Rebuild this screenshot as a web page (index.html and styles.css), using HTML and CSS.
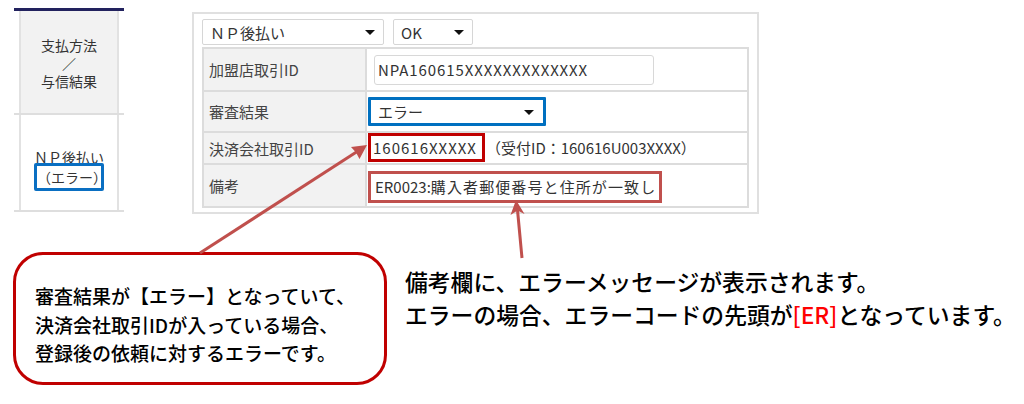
FILE: index.html
```html
<!DOCTYPE html>
<html lang="ja">
<head>
<meta charset="utf-8">
<title>NP後払い エラー</title>
<link rel="stylesheet" href="styles.css">
</head>
<body>
<div class="page">
  <div class="top">
    <div class="side">
      <div class="side-bar"></div>
      <div class="side-row side-head">
        <div class="side-cell">支払方法<br>／<br>与信結果</div>
      </div>
      <div class="side-row side-body">
        <div class="side-cell">
          <span class="np">ＮＰ後払い</span>
          <span class="blue-box">（エラー）</span>
        </div>
      </div>
    </div>
    <div class="panel">
      <div class="selects">
        <div class="select sel-method"><span>ＮＰ後払い</span><i class="caret"></i></div>
        <div class="select sel-ok"><span>OK</span><i class="caret"></i></div>
      </div>
      <div class="form-table">
        <div class="row r1">
          <div class="label">加盟店取引ID</div>
          <div class="value"><div class="input">NPA160615XXXXXXXXXXXXX</div></div>
        </div>
        <div class="row r2">
          <div class="label">審査結果</div>
          <div class="value"><div class="select sel-result"><span>エラー</span><i class="caret"></i></div></div>
        </div>
        <div class="row r3">
          <div class="label">決済会社取引ID</div>
          <div class="value"><div class="red-box">160616XXXXX</div><span class="sub">（受付ID：160616U003XXXX）</span></div>
        </div>
        <div class="row r4">
          <div class="label">備考</div>
          <div class="value"><div class="memo">ER0023:<span class="wide">購入者郵便番号と住所が一致し</span></div></div>
        </div>
      </div>
    </div>
  </div>
  <div class="bottom">
    <div class="callout">審査結果が【エラー】となっていて、<br>決済会社取引IDが入っている場合、<br>登録後の依頼に対するエラーです。</div>
    <div class="note">備考欄に、エラーメッセージが表示されます。<br>エラーの場合、エラーコードの先頭が<span class="red">[ER]</span>となっています。</div>
  </div>
  <svg class="arrows" width="1024" height="404" viewBox="0 0 1024 404">
    <line x1="200" y1="253" x2="358" y2="151" class="shaft"/>
    <polygon points="367,145 359.5,159 356,152.5 351,147" class="head"/>
    <line x1="522" y1="258" x2="517.5" y2="210" class="shaft"/>
    <polygon points="516,200 524.5,214 517.5,210.5 510.5,215" class="head"/>
  </svg>
</div>
</body>
</html>
```

FILE: styles.css
```css
* { box-sizing: border-box; }
html, body { margin: 0; padding: 0; background: #fff; }
body {
  font-family: "Noto Sans CJK JP", "Noto Sans", sans-serif;
  color: #333;
}
.page {
  position: relative;
  width: 1024px;
  height: 404px;
  overflow: hidden;
}
.top {
  display: flex;
  align-items: flex-start;
  padding-top: 8px;
  height: 214px;
}

/* left column */
.side {
  margin-left: 14px;
  width: 110px;
}
.side-bar {
  height: 3px;
  background: #22225e;
}
.side-row {
  border-bottom: 2px solid #dedede;
}
.side-cell {
  margin: 0 5px;
  border-left: 2px solid #e2e2e2;
  border-right: 2px solid #e2e2e2;
  height: 100%;
  font-size: 14px;
  line-height: 18px;
  text-align: center;
  color: #333;
}
.side-head { height: 104px; }
.side-head .side-cell {
  background: #f2f2f2;
  display: flex;
  align-items: center;
  justify-content: center;
  padding-top: 1px;
}
.side-body { height: 97px; }
.side-body .side-cell {
  display: flex;
  flex-direction: column;
  align-items: center;
  justify-content: center;
  padding-top: 14px;
}
.np {
  line-height: 16px;
}
.blue-box {
  display: inline-block;
  margin-top: -2px;
  width: 70px;
  height: 28px;
  line-height: 22px;
  border: 3px solid #0a6fc2;
  border-radius: 2px;
}

/* right panel */
.panel {
  margin-left: 68px;
  margin-top: 4px;
  width: 567px;
  height: 202px;
  border: 2px solid #e0e0e0;
  padding: 5px 0 0 8px;
}
.selects {
  display: flex;
  gap: 9px;
  height: 26px;
}
.select {
  position: relative;
  display: flex;
  align-items: center;
  height: 26px;
  border: 1px solid #d6d6d6;
  border-radius: 2px;
  background: #fff;
  font-size: 15px;
  color: #333;
  padding-left: 7px;
}
.sel-method { width: 182px; }
.sel-ok { width: 80px; }
.caret {
  position: absolute;
  right: 8px;
  top: 50%;
  margin-top: -2px;
  width: 0;
  height: 0;
  border-left: 5px solid transparent;
  border-right: 5px solid transparent;
  border-top: 5px solid #111;
}
.form-table {
  margin-top: 2px;
  width: 547px;
  border: 2px solid #dcdcdc;
}
.row {
  display: grid;
  grid-template-columns: 163px 1fr;
  border-bottom: 2px solid #dcdcdc;
}
.row:last-child { border-bottom: none; }
.r1 { height: 43px; }
.r2 { height: 41px; }
.r3 { height: 32px; }
.r4 { height: 41px; }
.label {
  background: #f2f2f2;
  border-right: 2px solid #dcdcdc;
  display: flex;
  align-items: center;
  padding-left: 5px;
  font-size: 15px;
  color: #444;
}
.value {
  display: flex;
  align-items: center;
  font-size: 15px;
  color: #333;
  white-space: nowrap;
}
.input {
  margin-left: 7px;
  width: 280px;
  height: 30px;
  border: 1px solid #d8d8d8;
  border-radius: 3px;
  display: flex;
  align-items: center;
  padding-left: 3px;
  letter-spacing: 0.9px;
}
.sel-result {
  margin-left: 1px;
  width: 178px;
  height: 29px;
  border: 3px solid #0070c0;
  border-radius: 1px;
  padding-left: 7px;
}
.sel-result .caret { right: 9px; }
.r3 .value { align-items: flex-start; }
.red-box {
  margin-left: 1px;
  width: 117px;
  height: 29px;
  border: 3px solid #c00000;
  display: flex;
  align-items: center;
  padding-left: 2px;
  overflow: hidden;
  letter-spacing: 1px;
}
.sub {
  height: 29px;
  display: flex;
  align-items: center;
  padding-left: 1px;
}
.memo {
  margin-left: 1px;
  margin-top: 2px;
  width: 294px;
  height: 32px;
  border: 3px solid #c0504d;
  display: flex;
  align-items: center;
  padding-left: 4px;
  overflow: hidden;
}
.wide { letter-spacing: 1.1px; }

/* bottom */
.bottom {
  display: flex;
  align-items: flex-start;
  margin-top: 38px;
}
.callout {
  margin-left: 13px;
  width: 374px;
  height: 133px;
  border: 3px solid #c00000;
  border-radius: 30px;
  padding: 27px 0 0 19px;
  font-size: 19px;
  font-weight: 500;
  line-height: 28.5px;
  color: #000;
  white-space: nowrap;
}
.note {
  margin-left: 18px;
  padding-top: 13px;
  font-size: 22.8px;
  font-weight: 500;
  line-height: 33px;
  color: #000;
  white-space: nowrap;
}
.red { color: #ff0000; }

/* arrows overlay */
.arrows {
  position: absolute;
  left: 0;
  top: 0;
  pointer-events: none;
}
.shaft {
  stroke: #c0504d;
  stroke-width: 3;
}
.head {
  fill: #c0504d;
}
```
